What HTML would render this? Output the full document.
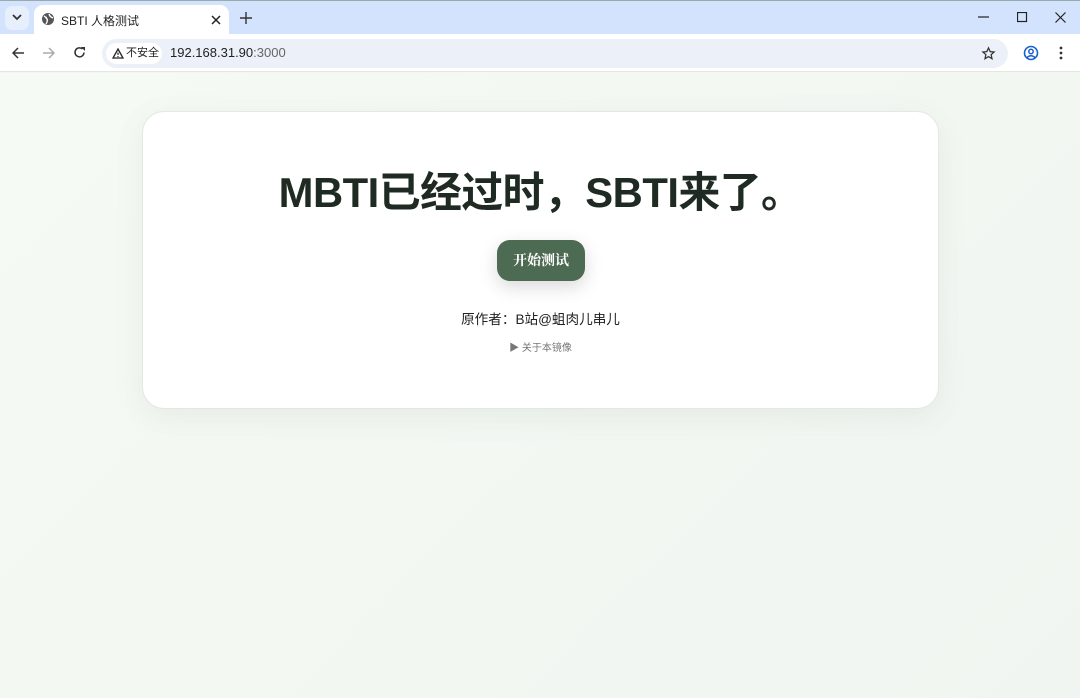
<!DOCTYPE html>
<html><head><meta charset="utf-8"><style>
*{margin:0;padding:0;box-sizing:border-box}
body{width:1080px;height:698px;overflow:hidden;font-family:"Liberation Sans","Noto Sans CJK SC",sans-serif;background:#f3f7f2;position:relative}
.top{position:absolute;left:0;top:0;width:1080px;height:34px;background:#d3e3fd;border-top:1px solid #9aa}
.tabdd{position:absolute;left:5px;top:5px;width:24px;height:24px;border-radius:7px;background:#e8effc}
.tab{position:absolute;left:34px;top:4px;width:195px;height:31px;background:#fff;border-radius:9px 9px 0 0}
.tab .t{position:absolute;left:27px;top:7px;font-size:12px;color:#222}
.bar{position:absolute;left:0;top:34px;width:1080px;height:38px;background:#fff;border-bottom:1px solid #e3e6e3}
.omni{position:absolute;left:102px;top:5px;width:906px;height:29px;border-radius:15px;background:#ebf0f9}
.chip{position:absolute;left:4px;top:4px;height:21px;width:56px;border-radius:11px;background:#fff;font-size:11px;line-height:13px;color:#222;padding:4px 0 0 20px;white-space:nowrap}
.url{position:absolute;left:68px;top:6px;font-size:13px;color:#222}
.page{position:absolute;left:0;top:73px;width:1080px;height:625px;background:linear-gradient(135deg,#f6faf4,#f1f5f1)}
.card{position:absolute;left:142px;top:38px;width:797px;height:298px;background:#fff;border-radius:22px;border:1px solid #e2e8e2;box-shadow:0 8px 30px rgba(60,90,60,.08)}
h1{position:absolute;left:0;width:100%;top:51px;text-align:center;font-size:41.8px;font-weight:bold;color:#1f2b22;letter-spacing:-0.5px;line-height:60px}
.btn{position:absolute;left:354px;top:128px;width:88px;height:41px;border-radius:13px;background:#4d6a52;color:#fff;font-weight:bold;font-size:14px;text-align:center;line-height:41px;box-shadow:0 6px 18px rgba(0,0,0,.15);font-family:"Noto Serif CJK SC",serif}
.auth{position:absolute;left:0;width:100%;top:196px;text-align:center;font-size:13.6px;color:#222}
.about{position:absolute;left:0;width:100%;top:227px;text-align:center;font-size:10px;color:#777}
svg{position:absolute}
</style></head><body>
<div class="top">
 <div class="tabdd"><svg style="left:7px;top:8px" width="10" height="8"><path d="M1 1l4 4 4-4" stroke="#333" stroke-width="1.8" fill="none"/></svg></div>
 <div class="tab">
  <svg style="left:7px;top:7px" width="14" height="14" viewBox="0 0 14 14"><circle cx="7" cy="7" r="6" fill="#555"/><path d="M3 4q2 1 3 3t-1 5M8 2q1 3 4 4" stroke="#fff" stroke-width="1.4" fill="none"/></svg>
  <div class="t">SBTI 人格测试</div>
  <svg style="left:177px;top:10px" width="10" height="10"><path d="M1 1l8 8M9 1l-8 8" stroke="#222" stroke-width="1.5"/></svg>
 </div>
 <svg style="left:240px;top:11px" width="12" height="12"><path d="M6 0v12M0 6h12" stroke="#333" stroke-width="1.4"/></svg>
 <svg style="left:978px;top:15px" width="12" height="2"><path d="M0 1h11" stroke="#222" stroke-width="1.2"/></svg>
 <svg style="left:1017px;top:11px" width="11" height="11"><rect x=".5" y=".5" width="9" height="9" stroke="#222" fill="none" stroke-width="1.2"/></svg>
 <svg style="left:1055px;top:11px" width="11" height="11"><path d="M.5 .5l10 10M10.5 .5l-10 10" stroke="#222" stroke-width="1.2"/></svg>
</div>
<div class="bar">
 <svg style="left:12px;top:13px" width="13" height="12"><path d="M12 6H1M6 1L1 6l5 5" stroke="#333" stroke-width="1.5" fill="none"/></svg>
 <svg style="left:42px;top:13px" width="13" height="12"><path d="M1 6h11M7 1l5 5-5 5" stroke="#aaa" stroke-width="1.5" fill="none"/></svg>
 <svg style="left:73px;top:12px" width="13" height="13" viewBox="0 0 13 13"><path d="M11 6.5A4.5 4.5 0 1 1 9.5 3" stroke="#333" stroke-width="1.5" fill="none"/><path d="M8 1h4v4z" fill="#333"/></svg>
 <div class="omni">
  <div class="chip"><svg style="left:6px;top:5px" width="12" height="11"><path d="M6 1L11 10H1z" stroke="#222" stroke-width="1.3" fill="none"/><path d="M6 4.5v2.5M6 8v1" stroke="#222" stroke-width="1.2"/></svg>不安全</div>
  <div class="url">192.168.31.90<span style="color:#666">:3000</span></div>
  <svg style="left:879px;top:7px" width="15" height="15" viewBox="0 0 24 24"><path d="M12 3l2.7 6 6.3.6-4.8 4.3 1.4 6.4L12 17l-5.6 3.3 1.4-6.4L3 9.6 9.3 9z" stroke="#333" stroke-width="2" fill="none"/></svg>
 </div>
 <svg style="left:1023px;top:11px" width="16" height="16" viewBox="0 0 16 16"><circle cx="8" cy="8" r="6.5" stroke="#1a5fd0" stroke-width="1.6" fill="none"/><circle cx="8" cy="6.5" r="2.2" stroke="#1a5fd0" stroke-width="1.5" fill="none"/><path d="M4 12.5q4-3.5 8 0" stroke="#1a5fd0" stroke-width="1.5" fill="none"/></svg>
 <svg style="left:1059px;top:12px" width="4" height="14"><circle cx="2" cy="2" r="1.4" fill="#333"/><circle cx="2" cy="7" r="1.4" fill="#333"/><circle cx="2" cy="12" r="1.4" fill="#333"/></svg>
</div>
<div class="page">
 <div class="card">
  <h1>MBTI已经过时，SBTI来了。</h1>
  <div class="btn">开始测试</div>
  <div class="auth">原作者：B站@蛆肉儿串儿</div>
  <div class="about">▶ 关于本镜像</div>
 </div>
</div>
</body></html>
